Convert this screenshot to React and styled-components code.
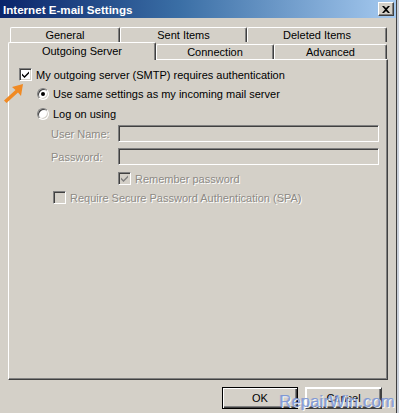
import React from "react";
import styled, { createGlobalStyle } from "styled-components";

const GlobalStyle = createGlobalStyle`
  html, body { margin: 0; padding: 0; }
  body { font-family: "Liberation Sans", Arial, sans-serif; font-size: 11px; color: #000; }
  * { box-sizing: border-box; }
`;

const Screen = styled.div`
  width: 399px;
  height: 413px;
  display: flex;
  background: #c9cfd9;
  overflow: hidden;
`;

const Window = styled.div`
  position: relative;
  width: 397px;
  height: 413px;
  background: #d4d0c8;
  border-right: 1px solid #404040;
  display: flex;
  flex-direction: column;
`;

const TitleBar = styled.div`
  height: 18px;
  flex: none;
  display: flex;
  align-items: center;
  justify-content: space-between;
  padding: 0 2px 0 3px;
  background: linear-gradient(to right, #0a246a 0%, #3a6ea5 45%, #a6caf0 100%);
`;

const Title = styled.span`
  color: #fff;
  font-weight: bold;
  font-size: 11.6px;
  letter-spacing: 0;
`;

const CloseButton = styled.div`
  width: 16px;
  height: 14px;
  background: #d4d0c8;
  border-top: 1px solid #fff;
  border-left: 1px solid #fff;
  border-right: 1px solid #404040;
  border-bottom: 1px solid #404040;
  box-shadow: inset -1px -1px 0 #808080;
  display: flex;
  align-items: center;
  justify-content: center;
`;

const Body = styled.div`
  display: flex;
  flex-direction: column;
  padding: 9px 8px 0 8px;
`;

const TabRow = styled.div`
  display: flex;
  height: ${(p) => p.$h}px;
  padding-left: ${(p) => p.$indent || 0}px;
  align-items: flex-end;
  position: relative;
  z-index: ${(p) => p.$z || 0};
`;

const Tab = styled.div`
  flex: none;
  width: ${(p) => p.$w}px;
  height: ${(p) => (p.$selected ? 18 : 15)}px;
  margin-bottom: ${(p) => (p.$selected ? -1 : 0)}px;
  background: #d4d0c8;
  border-top: 1px solid #fff;
  border-left: 1px solid #fff;
  border-right: 1px solid #404040;
  box-shadow: inset -1px 0 0 #808080;
  border-radius: 2px 2px 0 0;
  display: flex;
  align-items: ${(p) => (p.$selected ? "flex-start" : "center")};
  padding-top: ${(p) => (p.$selected ? 2 : 0)}px;
  justify-content: center;
  position: relative;
  z-index: ${(p) => (p.$selected ? 2 : 1)};
  white-space: nowrap;
`;

const Panel = styled.div`
  height: 321px;
  width: 380px;
  background: #d4d0c8;
  border-top: 1px solid #fff;
  border-left: 1px solid #fff;
  border-right: 1px solid #404040;
  border-bottom: 1px solid #404040;
  box-shadow: inset -1px -1px 0 #808080;
  display: flex;
  flex-direction: column;
  position: relative;
  z-index: 1;
`;

const Row = styled.div`
  display: flex;
  align-items: center;
  height: ${(p) => p.$h || 13}px;
  margin-top: ${(p) => p.$mt}px;
  padding-left: ${(p) => p.$pl}px;
  gap: ${(p) => (p.$gap === undefined ? 5 : p.$gap)}px;
  white-space: nowrap;
`;

const Label = styled.span`
  color: ${(p) => (p.$disabled ? "#8d8a85" : "#000")};
  text-shadow: ${(p) => (p.$disabled ? "1px 1px 0 #fff" : "none")};
  width: ${(p) => (p.$w ? `${p.$w}px` : "auto")};
  flex: none;
`;

const Box = styled.div`
  width: 13px;
  height: 13px;
  flex: none;
  background: ${(p) => (p.$disabled ? "#d4d0c8" : "#fff")};
  border-top: 1px solid #808080;
  border-left: 1px solid #808080;
  border-right: 1px solid #fff;
  border-bottom: 1px solid #fff;
  box-shadow: inset 1px 1px 0 #404040, inset -1px -1px 0 #d4d0c8;
  display: flex;
  align-items: center;
  justify-content: center;
`;

const Radio = styled.div`
  width: 12px;
  height: 12px;
  flex: none;
  border-radius: 50%;
  background: #fff;
  border: 1px solid;
  border-color: #808080 #fff #fff #808080;
  box-shadow: inset 1px 1px 0 #404040, inset -1px -1px 0 #d4d0c8;
  display: flex;
  align-items: center;
  justify-content: center;
  &::after {
    content: "";
    display: ${(p) => (p.$on ? "block" : "none")};
    width: 4px;
    height: 4px;
    border-radius: 50%;
    background: #000;
  }
`;

const Input = styled.div`
  width: 261px;
  height: 17px;
  flex: none;
  background: #d4d0c8;
  border-top: 1px solid #808080;
  border-left: 1px solid #808080;
  border-right: 1px solid #fff;
  border-bottom: 1px solid #fff;
  box-shadow: inset 1px 1px 0 #404040, inset -1px -1px 0 #d4d0c8;
`;

const ButtonBar = styled.div`
  display: flex;
  justify-content: flex-end;
  gap: 7px;
  padding-right: 6px;
  margin-top: 7px;
`;

const Button = styled.div`
  width: ${(p) => p.$w}px;
  height: 22px;
  background: #d4d0c8;
  border: 1px solid ${(p) => (p.$default ? "#000" : "#d4d0c8")};
  box-shadow: ${(p) =>
    p.$default
      ? "inset 1px 1px 0 #fff, inset -1px -1px 0 #404040, inset -2px -2px 0 #808080"
      : "inset 1px 1px 0 #fff, inset -1px -1px 0 #404040, inset -2px -2px 0 #808080"};
  border-color: ${(p) => (p.$default ? "#000" : "#fff #404040 #404040 #fff")};
  display: flex;
  align-items: center;
  justify-content: center;
`;

const Arrow = styled.svg`
  position: absolute;
  left: 3px;
  top: 82px;
  z-index: 3;
`;

const Watermark = styled.div`
  position: absolute;
  right: 1px;
  bottom: 2px;
  z-index: 4;
  font-family: "Liberation Sans", Arial, sans-serif;
  font-size: 16.5px;
  color: rgba(120, 148, 214, 0.85);
  text-shadow: 1px 1px 0 rgba(255, 255, 255, 0.9), -1px 0 0 rgba(80, 110, 190, 0.35);
  letter-spacing: 0.2px;
`;

const Check = ({ color = "#000" }) => (
  <svg width="9" height="9" viewBox="0 0 9 9">
    <path d="M1 3.5 L3.5 6 L8 1.5 L8 3.5 L3.5 8 L1 5.5 Z" fill={color} />
  </svg>
);

const tabsTop = [
  { label: "General", w: 110 },
  { label: "Sent Items", w: 127 },
  { label: "Deleted Items", w: 140 },
];
const tabsBottom = [
  { label: "Outgoing Server", w: 148, selected: true },
  { label: "Connection", w: 118 },
  { label: "Advanced", w: 113 },
];

export default function App() {
  return (
    <>
      <GlobalStyle />
      <Screen>
        <Window>
          <TitleBar>
            <Title>Internet E-mail Settings</Title>
            <CloseButton>
              <svg width="8" height="7" viewBox="0 0 8 7">
                <path d="M0 0 H2 L4 2 L6 0 H8 L5 3.5 L8 7 H6 L4 5 L2 7 H0 L3 3.5 Z" fill="#000" />
              </svg>
            </CloseButton>
          </TitleBar>
          <Body>
            <TabRow $h={15} $indent={2}>
              {tabsTop.map((t) => (
                <Tab key={t.label} $w={t.w}>{t.label}</Tab>
              ))}
            </TabRow>
            <TabRow $h={17} $z={2}>
              {tabsBottom.map((t) => (
                <Tab key={t.label} $w={t.w} $selected={t.selected}>{t.label}</Tab>
              ))}
            </TabRow>
            <Panel>
              <Row $mt={8} $pl={10} $gap={4}>
                <Box><Check /></Box>
                <Label>My outgoing server (SMTP) requires authentication</Label>
              </Row>
              <Row $mt={6} $pl={28} $gap={4}>
                <Radio $on />
                <Label>Use same settings as my incoming mail server</Label>
              </Row>
              <Row $mt={7} $pl={28} $gap={4}>
                <Radio />
                <Label>Log on using</Label>
              </Row>
              <Row $mt={5} $pl={42} $h={17} $gap={0}>
                <Label $disabled $w={67}>User Name:</Label>
                <Input />
              </Row>
              <Row $mt={6} $pl={42} $h={17} $gap={0}>
                <Label $disabled $w={67}>Password:</Label>
                <Input />
              </Row>
              <Row $mt={7} $pl={109} $gap={4}>
                <Box $disabled><Check color="#808080" /></Box>
                <Label $disabled>Remember password</Label>
              </Row>
              <Row $mt={6} $pl={44} $gap={4}>
                <Box $disabled />
                <Label $disabled>Require Secure Password Authentication (SPA)</Label>
              </Row>
            </Panel>
            <ButtonBar>
              <Button $w={76} $default>OK</Button>
              <Button $w={77}>Cancel</Button>
            </ButtonBar>
          </Body>
          <Arrow width="24" height="24" viewBox="0 0 24 24">
            <path d="M20 2 L9 5 L12.5 8 L1 18.5 L3.5 21 L15 10.5 L18 14 Z" fill="#f08a24" />
          </Arrow>
          <Watermark>RepairWin.com</Watermark>
        </Window>
      </Screen>
    </>
  );
}
